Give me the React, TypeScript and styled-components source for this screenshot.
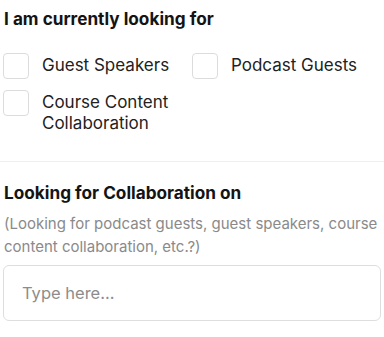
import { FC } from 'react';
import styled, { createGlobalStyle } from 'styled-components';

const GlobalStyle = createGlobalStyle`
  * { box-sizing: border-box; }
  body {
    margin: 0;
    background: #ffffff;
    font-family: "Inter", "Noto Sans", sans-serif;
    color: #1a1a1a;
  }
`;

const options = [
  'Guest Speakers',
  'Podcast Guests',
  'Course Content Collaboration',
];

const App: FC = () => {
  return (
    <>
      <GlobalStyle />
      <Page>
        <Section>
          <Heading>I am currently looking for</Heading>
          <OptionGrid>
            {options.map((label) => (
              <Option key={label}>
                <Box type="checkbox" />
                <OptionText>{label}</OptionText>
              </Option>
            ))}
          </OptionGrid>
        </Section>
        <Divider />
        <Section>
          <Heading>Looking for Collaboration on</Heading>
          <Hint>(Looking for podcast guests, guest speakers, course content collaboration, etc.?)</Hint>
          <TextField placeholder="Type here..." />
        </Section>
      </Page>
    </>
  );
};

export default App;

const Page = styled.div`
  width: 384px;
  padding: 7px 3px 0 3px;
`;

const Section = styled.div`
  display: flex;
  flex-direction: column;
`;

const Heading = styled.h3`
  margin: 0;
  padding-left: 1px;
  font-size: 17.2px;
  line-height: 24px;
  font-weight: 700;
  color: #141414;
`;

const OptionGrid = styled.div`
  display: grid;
  grid-template-columns: 1fr 1fr;
  row-gap: 11px;
  margin-top: 22px;
`;

const Option = styled.label`
  display: flex;
  align-items: flex-start;
  gap: 13px;
`;

const Box = styled.input`
  appearance: none;
  margin: 0;
  flex: 0 0 26px;
  width: 26px;
  height: 26px;
  border: 1px solid #dcdcdc;
  border-radius: 4px;
  background: #fff;
`;

const OptionText = styled.span`
  margin-top: 2px;
  font-size: 17px;
  line-height: 21px;
  color: #222;
`;

const Divider = styled.div`
  height: 1px;
  background: #efefef;
  margin: 27px -3px 19px -3px;
`;

const Hint = styled.p`
  margin: 7px 0 0 0;
  padding-left: 1px;
  font-size: 15px;
  line-height: 23px;
  color: #8a8a8a;
`;

const TextField = styled.input`
  margin-top: 7px;
  width: 100%;
  height: 56px;
  padding: 0 18px;
  border: 1px solid #dedede;
  border-radius: 6px;
  font-family: inherit;
  font-size: 16.5px;
  color: #222;
  outline: none;
  &::placeholder { color: #8c8c8c; }
`;
